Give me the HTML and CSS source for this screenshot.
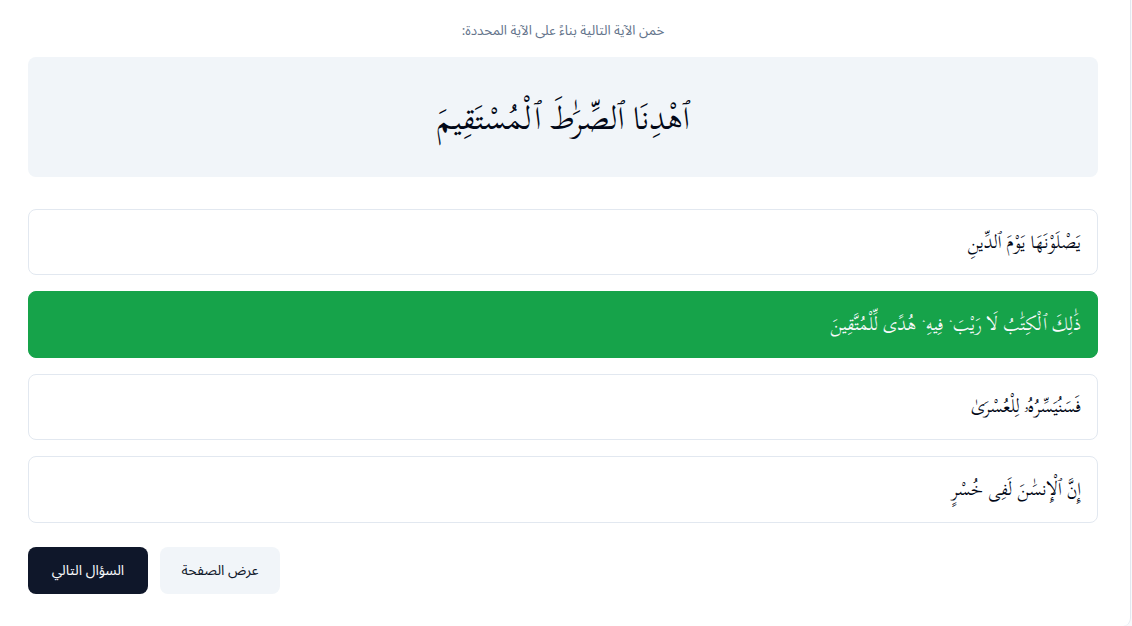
FILE: index.html
```html
<!DOCTYPE html>
<html lang="ar" dir="rtl">
<head>
<meta charset="utf-8">
<title>خمن الآية التالية</title>
<link rel="stylesheet" href="styles.css">
</head>
<body>
<main class="card">
  <p class="prompt">خمن الآية التالية بناءً على الآية المحددة:</p>
  <div class="verse"><span class="verse-text">ٱهْدِنَا ٱلصِّرَٰطَ ٱلْمُسْتَقِيمَ</span></div>
  <div class="options">
    <button class="option">يَصْلَوْنَهَا يَوْمَ ٱلدِّينِ</button>
    <button class="option correct">ذَٰلِكَ ٱلْكِتَٰبُ لَا رَيْبَ ۛ فِيهِ ۛ هُدًى لِّلْمُتَّقِينَ</button>
    <button class="option">فَسَنُيَسِّرُهُۥ لِلْعُسْرَىٰ</button>
    <button class="option">إِنَّ ٱلْإِنسَٰنَ لَفِى خُسْرٍ</button>
  </div>
  <div class="actions">
    <button class="btn btn-dark">السؤال التالي</button>
    <button class="btn btn-light">عرض الصفحة</button>
  </div>
</main>
</body>
</html>
```
FILE: styles.css
```css
* { box-sizing: border-box; }
html, body { margin: 0; height: 100%; }
body {
  background: #f8fafc;
  overflow: hidden;
  font-family: "Noto Sans Arabic", "Noto Sans", sans-serif;
}
.card {
  width: 1131px;
  height: 626px;
  margin-right: auto;
  background: #fff;
  border-right: 1px solid #e2e8f0;
  border-bottom-right-radius: 8px;
  padding: 21px 32px 0 28px;
}
.prompt {
  margin: 0 0 16px;
  text-align: center;
  font-size: 13.33px;
  line-height: 20px;
  color: #64748b;
}
.verse {
  height: 120px;
  padding-top: 3px;
  margin-bottom: 32px;
  background: #f1f5f9;
  border-radius: 8px;
  display: flex;
  align-items: center;
  justify-content: center;
  font-family: "Scheherazade New", serif;
  font-size: 32px;
  color: #020817;
}
.options { display: flex; flex-direction: column; gap: 16px; margin-bottom: 24px; }
.option {
  height: 66.4px;
  padding: 0 16px;
  text-align: right;
  background: #fff;
  border: 1px solid #e2e8f0;
  border-radius: 8px;
  font-family: "Scheherazade New", serif;
  font-size: 18px;
  color: #020817;
}
.correct { background: #16a34a; border-color: #16a34a; color: #f8fafc; }
.actions { display: flex; gap: 12px; direction: ltr; }
.btn {
  width: 120px;
  height: 47px;
  border: 0;
  border-radius: 8px;
  font-family: inherit;
  font-size: 14px;
}
.btn-light { background: #f1f5f9; color: #0f172a; }
.btn-dark { background: #0f172a; color: #f8fafc; }
```
